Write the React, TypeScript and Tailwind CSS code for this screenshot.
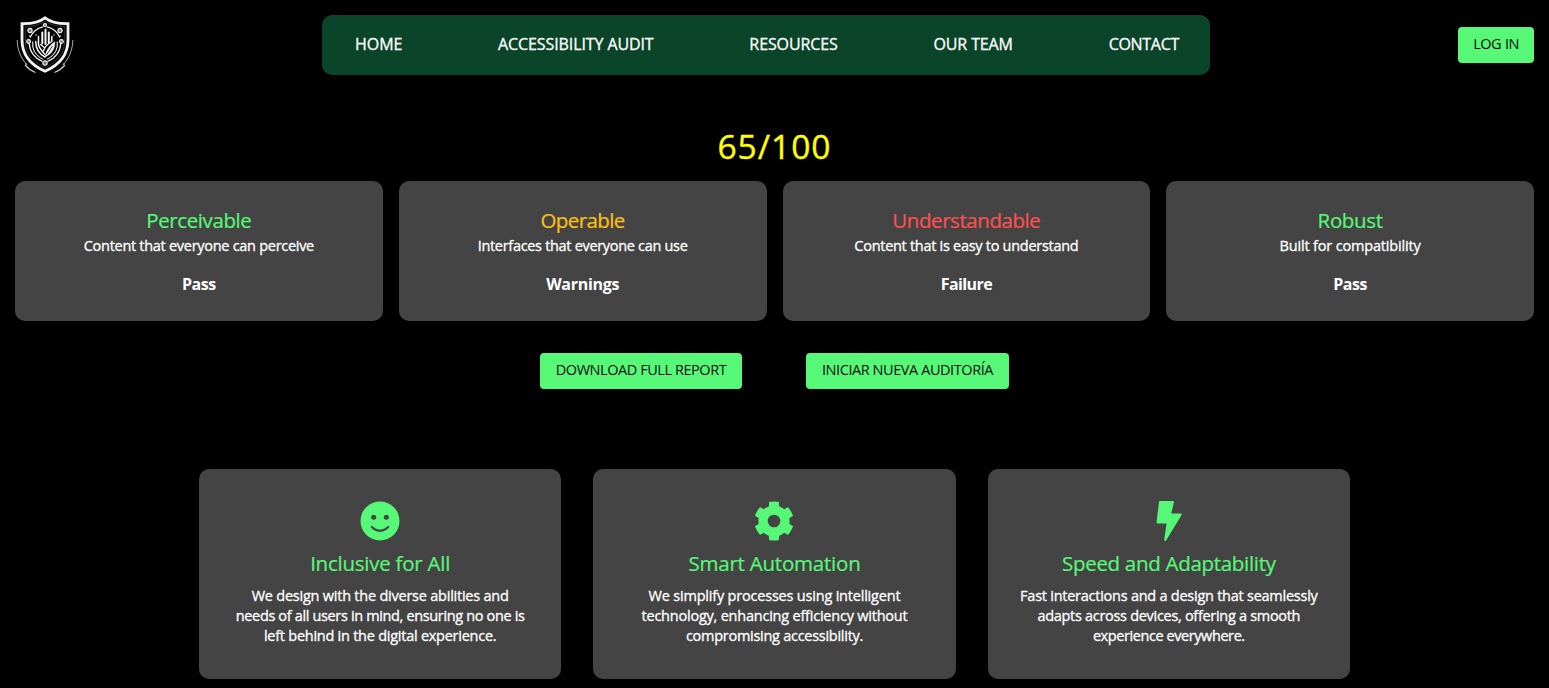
import type { ReactNode } from 'react';

function ShieldLogo() {
  return (
    <svg viewBox="0 0 60 60" className="h-[60px] w-[60px]" fill="none" stroke="#f4f4f4" aria-hidden="true">
      <path
        d="M30 2.8C25 6.6 17 8.9 7 8.6V25C7 40 15 49.7 30 56.3C45 49.7 53 40 53 25V8.6C43 8.9 35 6.6 30 2.8Z"
        strokeWidth="2.8"
      />
      <path d="M30 6.2C25 9.6 18 11.5 10.3 11.5V25C10.3 38 17 46.6 30 52.8C43 46.6 49.7 38 49.7 25V11.5C42 11.5 35 9.6 30 6.2Z" strokeWidth="0.5" opacity="0.4" />
      <path d="M2.2 25C2.300 35 6 43.500 12.2 50M57.8 25C57.700 35 54 43.500 47.8 50" strokeWidth="1" opacity="0.7" />
      <path d="M10 50C13 53.500 16.500 56 20.500 57.500M50 50C47 53.500 43.500 56 39.500 57.500" strokeWidth="1.200" opacity="0.8" />
      <path d="M28 11.8C22.5 13 17.5 17 15 22.500M32 11.8C37.500 13 42.5 17 45 22.500" strokeWidth="1.300" />
      <path d="M14.200 28C14.5 36 19 42.5 27.5 46.5M45.8 28C45.5 36 41 42.5 32.5 46.5" strokeWidth="1.300" />
      <path d="M17.8 26.5V32C19 37.500 22.5 41.5 27.8 44.200M42.2 26.5V32C41 37.500 37.5 41.5 32.2 44.200" strokeWidth="1.100" />
      <g strokeWidth="1.100" fill="#777">
        <circle cx="30" cy="10.200" r="1.600" />
        <circle cx="15" cy="15.5" r="2.100" />
        <circle cx="45" cy="15.5" r="2.100" />
        <circle cx="13.600" cy="26.500" r="1.900" />
        <circle cx="46.4" cy="26.500" r="1.900" />
        <circle cx="30" cy="48" r="2.200" />
      </g>
      <g strokeLinecap="round" strokeWidth="2">
        <path d="M30.500 14.500V29M27.300 17.500V28.500M33.800 17.500V27.500" />
        <path d="M23.500 21.500V30C24.500 33 26 35 29.500 39M36.800 21.500V26.500" strokeWidth="1.5" />
        <path d="M30 42C23.500 38.500 20.600 34 20.800 26.500" strokeWidth="1.5" />
        <path d="M30 42C31 36 34 31 39.800 26.800C40 34 36.800 38.800 30 42Z" fill="#f4f4f4" strokeWidth="0.6" />
        <path d="M28.500 36C29 32.500 31.500 30 36 27M25.500 29.500L30 33" strokeWidth="1.4" />
      </g>
      <path d="M31.500 40L37.500 31" stroke="#111" strokeWidth="0.8" />
      <g fill="#ccc" stroke="none">
        <circle cx="21" cy="20" r="0.8" />
        <circle cx="39" cy="20" r="0.8" />
        <circle cx="14.500" cy="21" r="0.7" />
        <circle cx="45.5" cy="21" r="0.7" />
        <circle cx="11" cy="49" r="0.8" />
        <circle cx="49" cy="49" r="0.8" />
      </g>
    </svg>
  );
}

function SmileIcon() {
  return (
    <svg viewBox="0 0 40 40" className="h-10 w-10" aria-hidden="true">
      <circle cx="20" cy="20" r="19.500" fill="#57f778" />
      <circle cx="13.700" cy="16.200" r="2.500" fill="#444" />
      <circle cx="26.300" cy="16.200" r="2.500" fill="#444" />
      <path d="M11.900 26.100C16.500 31 23.500 31 28.100 26.100" fill="none" stroke="#444" strokeWidth="2.200" strokeLinecap="round" />
    </svg>
  );
}

function GearIcon() {
  return (
    <svg viewBox="0 0 40 40" className="h-10 w-10" fill="#57f778" aria-hidden="true">
      <circle cx="20" cy="20" r="15.600" />
      <path id="cog-teeth" d="M16 0.700Q20 0.200 24 0.700Q25 0.800 25 1.700L25.200 8V32L25 38.300Q25 39.200 24 39.300Q20 39.800 16 39.300Q15 39.200 15 38.300L14.800 32V8L15 1.700Q15 0.800 16 0.700Z" />
      <use href="#cog-teeth" transform="rotate(60 20 20)" />
      <use href="#cog-teeth" transform="rotate(120 20 20)" />
      <circle cx="20" cy="20" r="6.300" fill="#444" />
    </svg>
  );
}

function BoltIcon() {
  return (
    <svg viewBox="0 0 40 40" className="h-10 w-10" aria-hidden="true">
      <path
        d="M11 1H24L21 13.500H31.700L16.200 39L18.800 21.500H8.500Z"
        fill="#57f778"
        stroke="#57f778"
        strokeWidth="2"
        strokeLinejoin="round"
      />
    </svg>
  );
}

const navItems = [
  { label: 'HOME', tracking: 'tracking-[-0.05px]' },
  { label: 'ACCESSIBILITY AUDIT', tracking: 'tracking-[-0.1px]' },
  { label: 'RESOURCES', tracking: 'tracking-[-0.1px]' },
  { label: 'OUR TEAM', tracking: 'tracking-[-0.12px]' },
  { label: 'CONTACT', tracking: 'tracking-[-0.3px]' },
];

const principles = [
  { title: 'Perceivable', titleStyle: 'text-[#57f778] tracking-[-0.4px]', text: 'Content that everyone can perceive', textStyle: 'tracking-[-0.285px]', status: 'Pass', statusStyle: 'tracking-[-0.5px]' },
  { title: 'Operable', titleStyle: 'text-[#fdc013] tracking-[-0.6px]', text: 'Interfaces that everyone can use', textStyle: 'tracking-[-0.31px]', status: 'Warnings', statusStyle: 'tracking-[-0.3px]' },
  { title: 'Understandable', titleStyle: 'text-[#fd5052] tracking-[-0.43px]', text: 'Content that is easy to understand', textStyle: 'tracking-[-0.285px]', status: 'Failure', statusStyle: 'tracking-[-0.6px]' },
  { title: 'Robust', titleStyle: 'text-[#57f778] tracking-[-0.35px]', text: 'Built for compatibility', textStyle: 'tracking-[-0.17px]', status: 'Pass', statusStyle: 'tracking-[-0.5px]' },
];

type Feature = {
  icon: ReactNode;
  title: string;
  titleStyle: string;
  lines: { text: string; style: string }[];
};

const features: Feature[] = [
  {
    icon: <SmileIcon />,
    title: 'Inclusive for All',
    titleStyle: 'tracking-[-0.24px]',
    lines: [
      { text: 'We design with the diverse abilities and', style: 'tracking-[-0.23px]' },
      { text: 'needs of all users in mind, ensuring no one is', style: 'tracking-[-0.35px]' },
      { text: 'left behind in the digital experience.', style: 'tracking-[-0.25px]' },
    ],
  },
  {
    icon: <GearIcon />,
    title: 'Smart Automation',
    titleStyle: 'tracking-[-0.22px]',
    lines: [
      { text: 'We simplify processes using intelligent', style: 'tracking-[-0.2px]' },
      { text: 'technology, enhancing efficiency without', style: 'tracking-[-0.22px]' },
      { text: 'compromising accessibility.', style: 'tracking-[-0.27px]' },
    ],
  },
  {
    icon: <BoltIcon />,
    title: 'Speed and Adaptability',
    titleStyle: 'tracking-[-0.3px]',
    lines: [
      { text: 'Fast interactions and a design that seamlessly', style: 'tracking-[-0.25px]' },
      { text: 'adapts across devices, offering a smooth', style: 'tracking-[-0.3px]' },
      { text: 'experience everywhere.', style: 'tracking-[-0.42px]' },
    ],
  },
];

function Button({ children, className }: { children: ReactNode; className: string }) {
  return (
    <button className={`h-9 whitespace-nowrap rounded bg-[#57f778] pb-[3px] text-center text-[14.5px] leading-5 text-[#0b0f0c] ${className}`}>
      {children}
    </button>
  );
}

export default function App() {
  return (
    <div className="min-h-screen bg-black px-[15px] pt-[15px] pb-[9px] font-['Open_Sans',sans-serif] text-white">
      <header className="flex h-[60px] items-center justify-between">
        <ShieldLogo />
        <nav className="mr-px flex h-[60px] w-[888px] items-center justify-between rounded-[10px] bg-[#0a4429] pr-[31px] pl-[33px] text-base whitespace-nowrap [-webkit-text-stroke:0.3px]">
          {navItems.map((item) => (
            <a key={item.label} href="#" className={`pb-0.5 ${item.tracking}`}>
              {item.label}
            </a>
          ))}
        </nav>
        <Button className="w-[76px] tracking-[-0.6px] [word-spacing:1px]">LOG IN</Button>
      </header>

      <main>
        <h1 className="mt-[47px] h-[59px] text-center text-[33.5px] leading-[48px] tracking-[1px] text-[#ffff00] [-webkit-text-stroke:0.4px]">65/100</h1>

        <section className="grid grid-cols-4 gap-4">
          {principles.map((p) => (
            <article key={p.title} className="h-[140px] rounded-[10px] bg-[#444] pt-[25px] text-center">
              <h2 className={`text-[20.5px] leading-7 [-webkit-text-stroke:0.2px] ${p.titleStyle}`}>{p.title}</h2>
              <p className={`mt-0.5 text-[14.5px] leading-5 [-webkit-text-stroke:0.3px] ${p.textStyle}`}>{p.text}</p>
              <p className={`mt-4 text-base leading-6 font-bold ${p.statusStyle}`}>{p.status}</p>
            </article>
          ))}
        </section>

        <div className="mt-8 flex justify-center gap-16">
          <Button className="w-[202px] tracking-[-0.44px]">DOWNLOAD FULL REPORT</Button>
          <Button className="w-[203px] tracking-[-0.43px]">INICIAR NUEVA AUDITORÍA</Button>
        </div>

        <section className="mx-auto mt-20 grid w-[1151px] grid-cols-3 gap-8">
          {features.map((f) => (
            <article key={f.title} className="flex h-[210px] flex-col items-center rounded-[10px] bg-[#444] pt-8 text-center">
              {f.icon}
              <h2 className={`mt-2 text-[20.5px] leading-7 text-[#57f778] [-webkit-text-stroke:0.2px] ${f.titleStyle}`}>{f.title}</h2>
              <div className="mt-[9px] text-[14.5px] leading-5 whitespace-nowrap [-webkit-text-stroke:0.3px]">
                {f.lines.map((line) => (
                  <p key={line.text} className={line.style}>
                    {line.text}
                  </p>
                ))}
              </div>
            </article>
          ))}
        </section>
      </main>
    </div>
  );
}
